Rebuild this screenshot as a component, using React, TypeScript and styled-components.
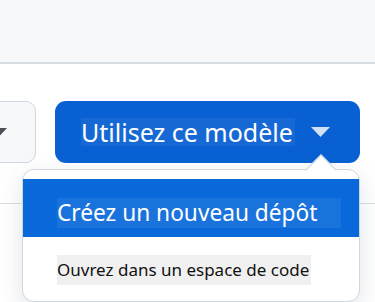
import React from "react";
import styled, { createGlobalStyle } from "styled-components";

const Global = createGlobalStyle`
  html, body { margin: 0; padding: 0; background: #ffffff; }
  body { font-family: "Noto Sans", "Open Sans", sans-serif; overflow: hidden; }
  * { box-sizing: border-box; }
`;

const Page = styled.div`
  width: 375px;
  height: 302px;
  overflow: hidden;
  position: relative;
  background: #ffffff;
`;

const Header = styled.div`
  height: 64px;
  background: #f6f8fa;
  border-bottom: 2px solid #d5dce3;
`;

const Main = styled.div`
  padding-top: 37px;
`;

const Row = styled.div`
  display: flex;
  align-items: flex-start;
  gap: 19px;
`;

const GhostButton = styled.div`
  margin-left: -40px;
  width: 76px;
  height: 62px;
  border: 1.5px solid #d0d7de;
  border-radius: 10px;
  background: #f6f8fa;
  display: flex;
  align-items: center;
  justify-content: flex-end;
  padding-right: 28px;
`;

const Group = styled.div`
  position: relative;
`;

const PrimaryButton = styled.div`
  width: 305px;
  height: 62px;
  border-radius: 11px;
  background: #0860d2;
  display: flex;
  align-items: center;
  padding-left: 26px;
  color: #ffffff;
  font-size: 25px;
  gap: 16px;
`;

const TextBox = styled.span<{ $bg: string; $pad: number; $h: number }>`
  display: inline-block;
  height: ${(p) => p.$h}px;
  line-height: ${(p) => p.$h}px;
  background: ${(p) => p.$bg};
  padding-right: ${(p) => p.$pad}px;
  white-space: nowrap;
`;

const Menu = styled.div`
  position: absolute;
  top: 68px;
  right: 0;
  width: 338px;
  height: 133px;
  background: #ffffff;
  border: 1.5px solid #d0d7de;
  border-radius: 12px;
  box-shadow: 0 8px 24px rgba(140, 149, 159, 0.25);
  padding-top: 9px;
`;

const Pointer = styled.svg`
  position: absolute;
  top: -16px;
  right: 22px;
`;

const Item = styled.div<{ $active?: boolean; $size: number }>`
  height: 58px;
  padding: 18px 0 0 34px;
  background: ${(p) => (p.$active ? "#0969da" : "transparent")};
  color: ${(p) => (p.$active ? "#ffffff" : "#111111")};
  font-size: ${(p) => p.$size}px;
`;

const Divider = styled.div`
  margin-top: 40px;
  border-top: 1.5px solid #d8dee4;
`;

export default function App() {
  return (
    <Page>
      <Global />
      <Header />
      <Main>
        <Row>
          <GhostButton>
            <svg width="16" height="9" viewBox="0 0 16 9">
              <path d="M0 0 H16 L8 8.5 Z" fill="#4a5058" />
            </svg>
          </GhostButton>
          <Group>
            <PrimaryButton>
              <TextBox $bg="rgba(255,255,255,0.06)" $pad={2} $h={28}>
                Utilisez ce modèle
              </TextBox>
              <svg width="19" height="10" viewBox="0 0 19 10">
                <path d="M0 0 H19 L9.5 10 Z" fill="#d0e0f5" />
              </svg>
            </PrimaryButton>
            <Menu>
              <Pointer width="32" height="17" viewBox="0 0 32 17">
                <path d="M0.5 17 L16 1 L31.5 17 Z" fill="#ffffff" />
                <path d="M0.5 16.5 L16 1 L31.5 16.5" fill="none" stroke="#d8dee4" strokeWidth="1.5" />
              </Pointer>
              <Item $active $size={22.7}>
                <TextBox $bg="rgba(255,255,255,0.07)" $pad={24} $h={30}>
                  Créez un nouveau dépôt
                </TextBox>
              </Item>
              <Item $size={17}>
                <TextBox $bg="#f0f0f0" $pad={2} $h={30}>
                  Ouvrez dans un espace de code
                </TextBox>
              </Item>
            </Menu>
          </Group>
        </Row>
        <Divider />
      </Main>
    </Page>
  );
}
